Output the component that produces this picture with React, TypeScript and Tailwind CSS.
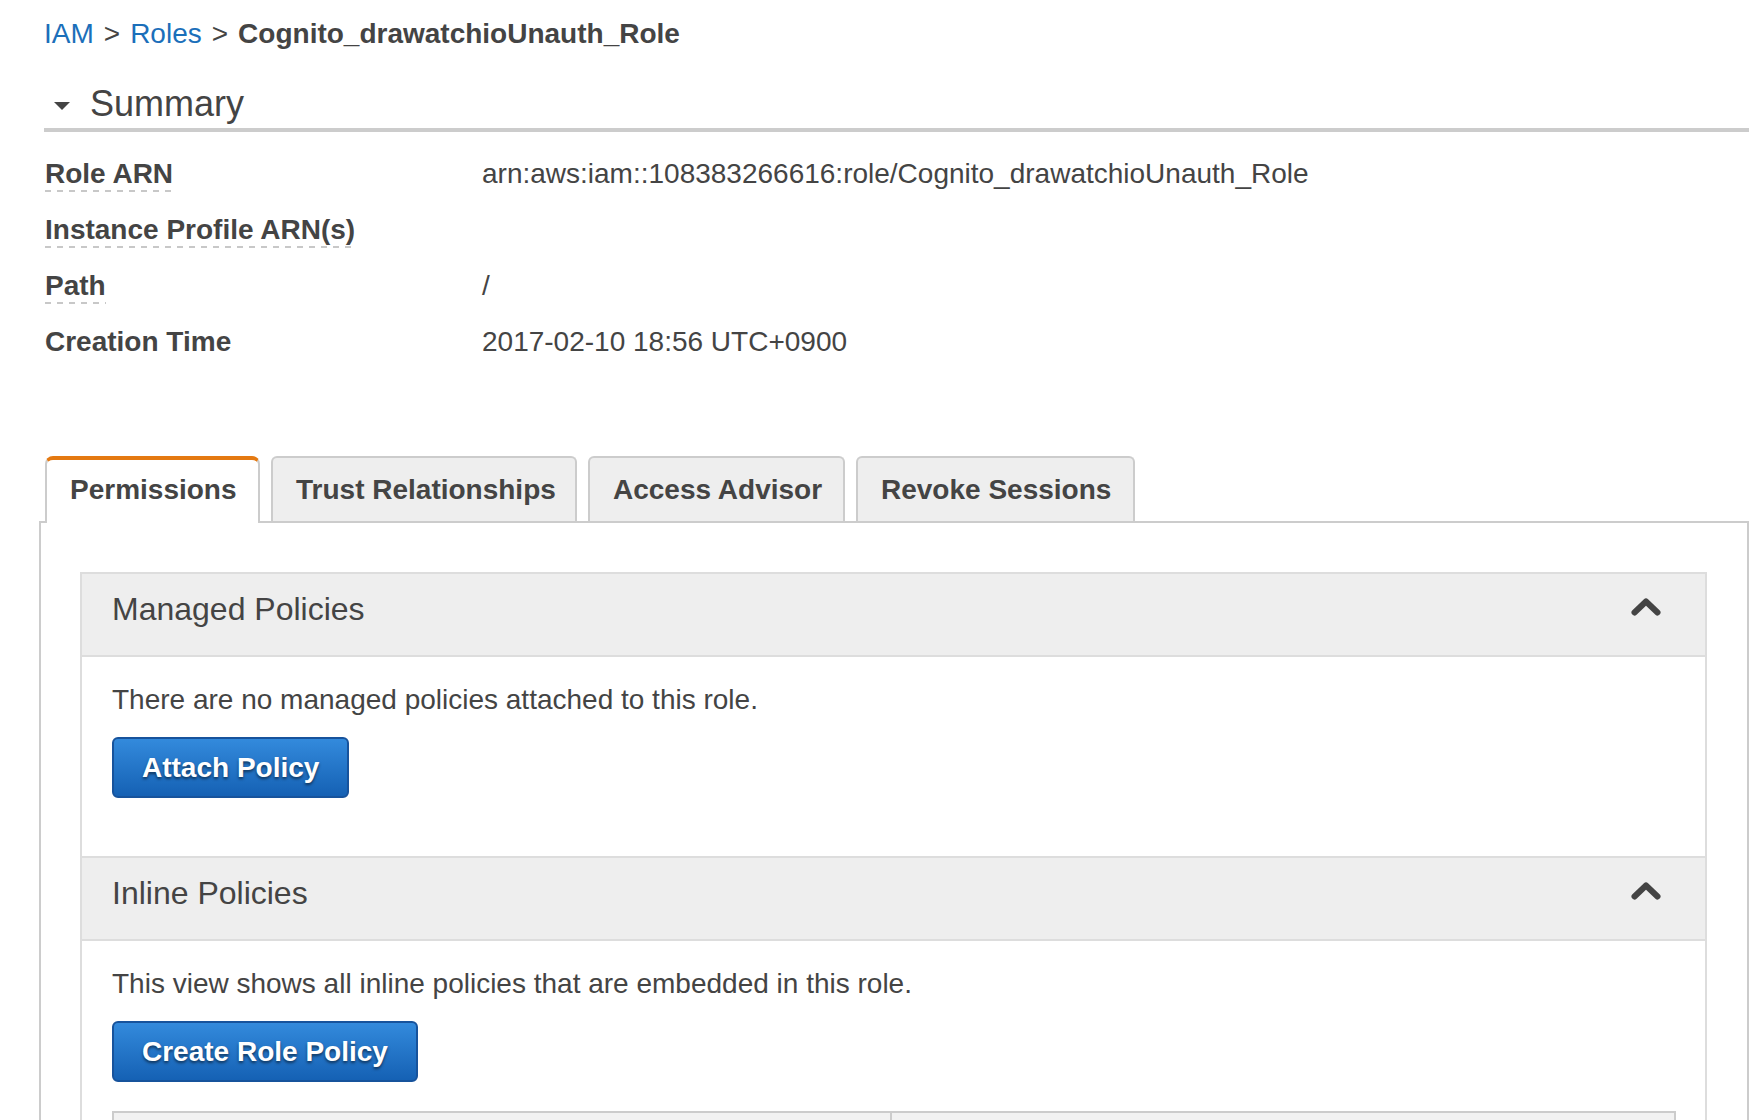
import { ReactNode } from "react"

const rows = [
    { label: "Role ARN", value: "arn:aws:iam::108383266616:role/Cognito_drawatchioUnauth_Role", dashed: true },
    { label: "Instance Profile ARN(s)", value: "", dashed: true },
    { label: "Path", value: "/", dashed: true },
    { label: "Creation Time", value: "2017-02-10 18:56 UTC+0900", dashed: false },
]

const tabs = [
    { name: "Permissions", width: "w-[215px]", active: true },
    { name: "Trust Relationships", width: "w-[306px]", active: false },
    { name: "Access Advisor", width: "w-[257px]", active: false },
    { name: "Revoke Sessions", width: "w-[279px]", active: false },
]

const ChevronUp = () => (
    <svg width="30" height="18" viewBox="0 0 30 18" className="mt-[11px] shrink-0">
        <polyline points="3.5,14.5 15,3.5 26.5,14.5" fill="none" stroke="#444" strokeWidth="6" strokeLinecap="round" strokeLinejoin="round" />
    </svg>
)

const BlueButton = ({ children }: { children: ReactNode }) => (
    <button className="mt-[17px] flex h-[61px] items-center rounded-[6px] border-2 border-[#17539c] bg-[linear-gradient(to_bottom,#338adc,#1561b4)] px-[28px] text-[28px] font-bold leading-[40px] text-white [text-shadow:0_2px_3px_rgba(0,0,0,0.55)]">
        {children}
    </button>
)

const SectionHeader = ({ title, first }: { title: string, first?: boolean }) => (
    <div className={`flex items-start justify-between border-b-2 border-[#ddd] bg-[#eee] pl-[30px] pr-[44px] pt-[13px] ${first ? "h-[83px]" : "h-[85px] border-t-2"}`}>
        <span className="text-[32px] leading-[44px] text-[#444]">{title}</span>
        <ChevronUp />
    </div>
)

const App = () => {
    return <>
        <div className="h-[1120px] overflow-hidden bg-white pl-[39px] pr-[15px] pt-[14px] font-['Liberation_Sans',Arial,sans-serif] text-[#444]">
            {/* breadcrumb */}
            <div className="ml-[5px] flex text-[28px] leading-[40px] whitespace-nowrap">
                <a className="text-[#1b6fba]">IAM</a>
                <span className="mx-[10px]">&gt;</span>
                <a className="text-[#1b6fba]">Roles</a>
                <span className="mx-[10px]">&gt;</span>
                <span className="font-bold">Cognito_drawatchioUnauth_Role</span>
            </div>

            {/* summary */}
            <div className="ml-[5px] mt-[26px] flex items-center border-b-4 border-[#ccc]">
                <svg width="16" height="9" viewBox="0 0 16 9" className="ml-[10px] mt-[4px]">
                    <polygon points="0,0 16,0 8,8" fill="#444" />
                </svg>
                <span className="ml-[20px] text-[36px] leading-[48px]">Summary</span>
            </div>

            <div className="ml-[6px] mt-[22px] flex flex-col gap-[16px]">
                {rows.map(r => (
                    <div key={r.label} className="grid grid-cols-[437px_1fr] text-[28px] leading-[40px]">
                        <div>
                            <span className={`inline-block font-bold ${r.dashed ? "bg-[linear-gradient(to_right,#c8c8c8_6px,transparent_6px)] bg-[length:12px_2px] bg-[position:0_36px] bg-repeat-x" : ""}`}>{r.label}</span>
                        </div>
                        <div className="whitespace-nowrap">{r.value}</div>
                    </div>
                ))}
            </div>

            {/* tabs */}
            <div className="relative z-10 -mb-[2px] ml-[6px] mt-[94px] flex items-start gap-[11px]">
                {tabs.map(t => t.active ? (
                    <div key={t.name} className={`${t.width} h-[67px] rounded-t-[8px] border-x-2 border-t-4 border-x-[#ccc] border-t-[#e47911] bg-white pl-[23px] pt-[10px] text-[28px] font-bold leading-[40px] whitespace-nowrap`}>
                        {t.name}
                    </div>
                ) : (
                    <div key={t.name} className={`${t.width} h-[65px] rounded-t-[6px] border-x-2 border-t-2 border-[#ccc] bg-[#eee] pl-[23px] pt-[12px] text-[28px] font-bold leading-[40px] whitespace-nowrap`}>
                        {t.name}
                    </div>
                ))}
            </div>

            <div className="border-2 border-[#ccc] pb-[40px] pl-[39px] pr-[40px] pt-[49px]">
                <div className="border-x-2 border-t-2 border-[#ddd]">
                    <SectionHeader title="Managed Policies" first />
                    <div className="pb-[58px] pl-[30px] pr-[29px] pt-[23px]">
                        <p className="text-[28px] leading-[40px]">There are no managed policies attached to this role.</p>
                        <BlueButton>Attach Policy</BlueButton>
                    </div>
                    <SectionHeader title="Inline Policies" />
                    <div className="pb-[40px] pl-[30px] pr-[29px] pt-[23px]">
                        <p className="text-[28px] leading-[40px]">This view shows all inline policies that are embedded in this role.</p>
                        <BlueButton>Create Role Policy</BlueButton>
                        <div className="mt-[29px] flex h-[60px] border-2 border-[#ccc] bg-[#f2f2f2]">
                            <div className="w-[778px] border-r-2 border-[#ccc]"></div>
                            <div className="flex-1"></div>
                        </div>
                    </div>
                </div>
            </div>
        </div>
    </>
}

export default App
